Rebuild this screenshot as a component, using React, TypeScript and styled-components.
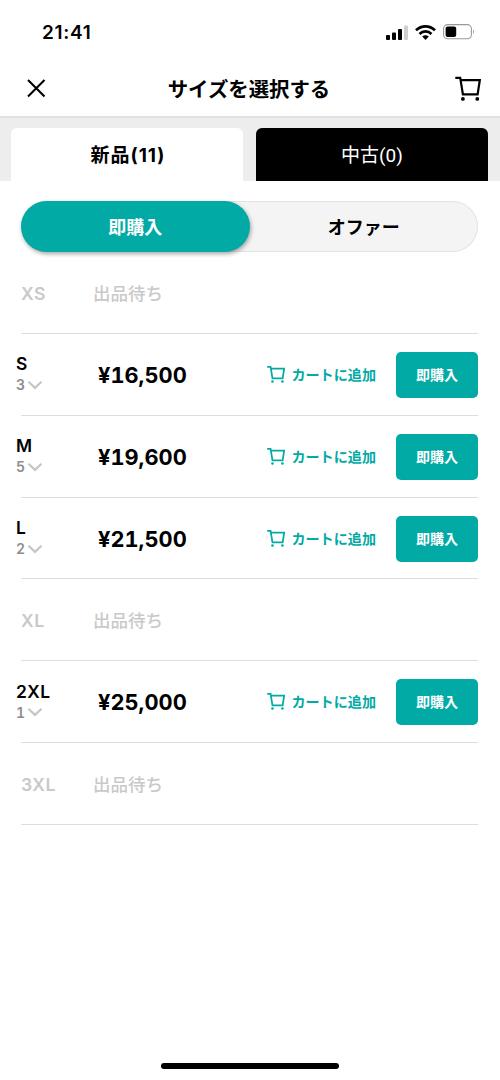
import React from 'react';
import styled, { createGlobalStyle, css } from 'styled-components';

const TEAL = '#02aaa5';
const JP = "'Noto Sans CJK JP', sans-serif";

const GlobalStyle = createGlobalStyle`
  * { box-sizing: border-box; }
  body { margin: 0; background: #fff; color: #000; font-family: Inter, ${JP}; }
  button { border: 0; margin: 0; padding: 0; background: none; font: inherit; color: inherit; }
  svg { display: block; flex: none; }
`;

const Screen = styled.div`
  display: flex;
  flex-direction: column;
  width: 500px;
  height: 1080px;
  background: #fff;
  overflow: hidden;
`;

const StatusBar = styled.div`
  display: flex;
  justify-content: space-between;
  align-items: center;
  height: 60px;
  padding: 4px 25px 0 42px;
`;

const Clock = styled.span`
  font-size: 19px;
  font-weight: 600;
  letter-spacing: 0.7px;
`;

const StatusIcons = styled.div`
  display: flex;
  align-items: center;
  gap: 7px;
`;

const Header = styled.header`
  display: grid;
  grid-template-columns: 60px 1fr 69px;
  align-items: center;
  height: 58px;
  padding: 0 19px 0 26px;
  border-bottom: 2px solid #e0e0e0;
`;

const HeaderButton = styled.button<{ $end?: boolean }>`
  display: flex;
  justify-content: ${p => (p.$end ? 'flex-end' : 'flex-start')};
`;

const Title = styled.h1`
  margin: 0;
  font: 700 20.4px/30px ${JP};
  text-align: center;
  white-space: nowrap;
`;

const Tabs = styled.div`
  display: grid;
  grid-template-columns: 232px 232px;
  gap: 13px;
  height: 63px;
  padding: 10px 12px 0 11px;
  background: #ededed;
`;

const Tab = styled.button<{ $active?: boolean }>`
  padding-bottom: 3px;
  border-radius: 6px 6px 0 0;
  font-size: 19px;
  ${p =>
    p.$active
      ? css`
          padding-left: 2px;
          background: #fff;
          color: #000;
          font-weight: 700;
          font-family: Inter, ${JP};
          letter-spacing: 1px;
        `
      : css`
          background: #000;
          color: #fff;
          font-weight: 400;
          font-family: Roboto, ${JP};
        `}
`;

const Segments = styled.div`
  display: flex;
  height: 51px;
  margin: 20px 22px 0 21px;
  border-radius: 26px;
  background: #f4f4f4;
  box-shadow: inset 0 0 0 1px #e3e3e3;
`;

const Segment = styled.button<{ $active?: boolean }>`
  flex: 1;
  border-radius: 26px;
  font: 700 18px/27px ${JP};
  ${p => p.$active && css`background: ${TEAL}; color: #fff; box-shadow: 1px 2px 4px rgba(0, 0, 0, 0.35);`}
`;

const List = styled.ul`
  margin: 0 22px 0 21px;
  padding: 0;
  list-style: none;
`;

const Row = styled.li`
  display: flex;
  align-items: center;
  height: 81.85px;
  padding-top: 1.4px;
  border-bottom: 1px solid #dedede;
`;

const SizeColumn = styled.div`
  width: 82px;
  margin: 0 0 1px -5px;
`;

const SizeName = styled.div`
  font-size: 17.4px;
  line-height: 21px;
  font-weight: 600;
  letter-spacing: 0.4px;
`;

const Count = styled.div`
  display: flex;
  align-items: center;
  gap: 2px;
  font-size: 14px;
  line-height: 21px;
  font-weight: 600;
  font-variant-numeric: tabular-nums;
  color: #8d8d8d;
`;

const Price = styled.div`
  flex: 1;
  font-size: 21.8px;
  font-weight: 700;
  font-variant-numeric: tabular-nums;
`;

const AddToCart = styled.button`
  display: flex;
  align-items: center;
  gap: 6px;
  margin: 0 20px 2px 0;
  color: ${TEAL};
  font: 700 14.1px/20px ${JP};
`;

const BuyButton = styled.button`
  width: 82px;
  height: 46px;
  padding-bottom: 2px;
  border-radius: 5px;
  background: ${TEAL};
  color: #fff;
  font: 700 14px/20px ${JP};
`;

const EmptySize = styled.div`
  width: 72px;
  color: #c9c9c9;
  font-size: 17.6px;
  font-weight: 600;
  letter-spacing: 0.5px;
`;

const Waiting = styled.div`
  color: #c9c9c9;
  font: 500 17.5px/26px ${JP};
`;

const HomeIndicator = styled.div`
  width: 178px;
  height: 6px;
  margin: auto auto 11px 161px;
  border-radius: 3px;
  background: #000;
`;

const CartIcon = ({ width, stroke }: { width: number; stroke: number }) => (
  <svg width={width} height={width} viewBox="0 0 26 26" fill="none" stroke="currentColor" strokeWidth={stroke}>
    <path d="M.3 2.8H5.2L7.9 19.3H22.6L24.8 5.2H5.6" />
    <circle cx="7.9" cy="23.9" r="1.9" fill="currentColor" stroke="none" />
    <circle cx="22.3" cy="23.9" r="1.9" fill="currentColor" stroke="none" />
  </svg>
);

const SignalIcon = () => (
  <svg width="22" height="15" viewBox="0 0 22 15">
    <rect x="0" y="10" width="4" height="5" rx="1" />
    <rect x="6" y="7.5" width="4" height="7.5" rx="1" />
    <rect x="12" y="4" width="4" height="11" rx="1" />
    <rect x="18" y="0.5" width="4" height="14.5" rx="1" fill="#cfcfcf" />
  </svg>
);

const WifiIcon = () => (
  <svg width="21" height="15" viewBox="0 0 21 15" fill="none" stroke="#000" strokeWidth="2.7">
    <path d="M1 5.3C6.4.1 14.6.1 20 5.3" />
    <path d="M4.5 8.9C8 5.6 13 5.6 16.5 8.9" />
    <path d="M7.2 11.6Q10.5 8.8 13.8 11.6L10.5 15Z" fill="#000" stroke="none" />
  </svg>
);

const BatteryIcon = () => (
  <svg width="32" height="16" viewBox="0 0 32 16">
    <rect x=".6" y=".6" width="27.8" height="14.2" rx="4" fill="none" stroke="#999" strokeWidth="1.1" />
    <rect x="2.6" y="2.5" width="10.6" height="10.4" rx="2" />
    <path d="M30 5.5Q32 7.7 30 10Z" fill="#999" />
  </svg>
);

const ChevronIcon = () => (
  <svg width="16" height="10" viewBox="0 0 16 10" fill="none" stroke="#c6c6c6" strokeWidth="2.2">
    <path d="M1.5 1.7L8 7.9L14.5 1.7" />
  </svg>
);

type Item = { size: string; count?: number; price?: string };

const items: Item[] = [
  { size: 'XS' },
  { size: 'S', count: 3, price: '¥16,500' },
  { size: 'M', count: 5, price: '¥19,600' },
  { size: 'L', count: 2, price: '¥21,500' },
  { size: 'XL' },
  { size: '2XL', count: 1, price: '¥25,000' },
  { size: '3XL' },
];

const SizeRow = ({ item }: { item: Item }) =>
  item.price ? (
    <Row>
      <SizeColumn>
        <SizeName>{item.size}</SizeName>
        <Count>{item.count}<ChevronIcon /></Count>
      </SizeColumn>
      <Price>{item.price}</Price>
      <AddToCart><CartIcon width={18} stroke={2.5} />カートに追加</AddToCart>
      <BuyButton>即購入</BuyButton>
    </Row>
  ) : (
    <Row>
      <EmptySize>{item.size}</EmptySize>
      <Waiting>出品待ち</Waiting>
    </Row>
  );

export default function App() {
  return (
    <Screen>
      <GlobalStyle />
      <StatusBar>
        <Clock>21:41</Clock>
        <StatusIcons><SignalIcon /><WifiIcon /><BatteryIcon /></StatusIcons>
      </StatusBar>
      <Header>
        <HeaderButton aria-label="閉じる">
          <svg width="20" height="20" viewBox="0 0 20 20" fill="none" stroke="#000" strokeWidth="2.1">
            <path d="M2 2L18.5 18.5M18.5 2L2 18.5" />
          </svg>
        </HeaderButton>
        <Title>サイズを選択する</Title>
        <HeaderButton $end aria-label="カート"><CartIcon width={26} stroke={2.2} /></HeaderButton>
      </Header>
      <Tabs>
        <Tab $active>新品(11)</Tab>
        <Tab>中古(0)</Tab>
      </Tabs>
      <Segments>
        <Segment $active>即購入</Segment>
        <Segment>オファー</Segment>
      </Segments>
      <List>
        {items.map(item => <SizeRow key={item.size} item={item} />)}
      </List>
      <HomeIndicator />
    </Screen>
  );
}
